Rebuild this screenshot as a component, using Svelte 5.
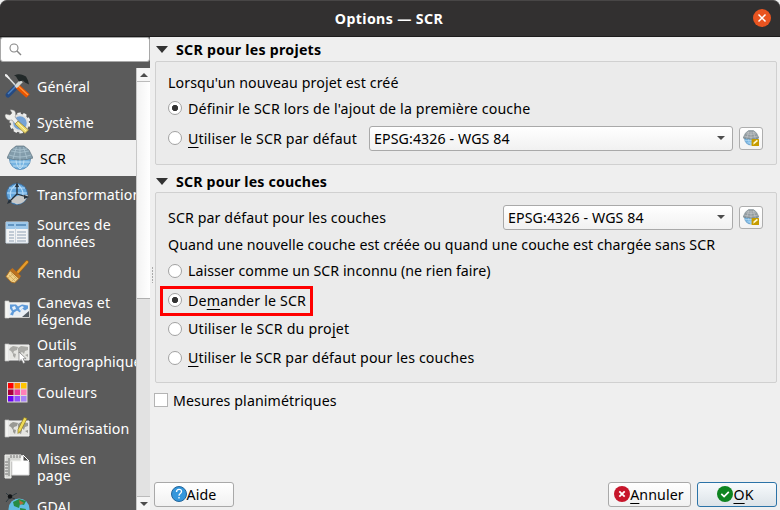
<script>
  const pages = [
    { icon: 'tools', lines: ['Général'] },
    { icon: 'system', lines: ['Système'] },
    { icon: 'crs', lines: ['SCR'], active: true },
    { icon: 'transform', lines: ['Transformations'] },
    { icon: 'table', lines: ['Sources de', 'données'] },
    { icon: 'brush', lines: ['Rendu'] },
    { icon: 'canvas', lines: ['Canevas et', 'légende'] },
    { icon: 'maptool', lines: ['Outils', 'cartographiques'] },
    { icon: 'colors', lines: ['Couleurs'] },
    { icon: 'digitize', lines: ['Numérisation'] },
    { icon: 'layout', lines: ['Mises en', 'page'] },
    { icon: 'gdal', lines: ['GDAL'] }
  ];
  const swatches = ['#f00', '#ff8c00', '#ffc400', '#a8003c', '#e8369a', '#ff80b8', '#6a00f4', '#8f4dff', '#a884f8'];
  const layerChoices = [
    { before: 'Laisser comme un SCR inconnu (ne rien faire)', key: '', after: '', tracking: 0.03 },
    { before: 'De', key: 'm', after: 'ander le SCR', tracking: 0.17, checked: true },
    { before: 'Utiliser le SCR du pro', key: 'j', after: 'et', tracking: 0.2 },
    { before: '', key: 'U', after: 'tiliser le SCR par défaut pour les couches', tracking: 0.12 }
  ];
</script>

{#snippet mapSheet(land)}
  <path d="M1 5h4v17H1z" fill="#f4f4f2" stroke="#bbb" stroke-width=".7" />
  <path d="M5 6h20v15H5z" fill="#e5e5e1" stroke="#f3f3f3" />
  <path d="M6 9l3-2 5 1-1 3-3 1-1 3-2-3-2-1zM9 14l3 1-1 4-2-2zM14 9l3-2 7 1v3l-3 1-1 3-2-2-3 2-1-3zM15 14l3 1-1 4-2-1zM21 16l3-1v3z" fill={land} />
{/snippet}

{#snippet globe(edit)}
  <svg viewBox="0 0 26 26" class="globe">
    <circle cx="13" cy="14" r="10.5" fill="#76b4e2" stroke="#4f86b3" stroke-width=".8" />
    <path d="M3 17h20M6 21h14M9 14c0 4 1 8 4 10M17 14c0 4-1 8-4 10M13 14v10" stroke="#cde7f8" fill="none" stroke-width=".8" />
    <path d="M9 1h8l5 4 4 8c-7 2.500-19 2.500-26 0l4-8z" fill={edit ? '#929b9f' : '#829cab'} stroke="#60747f" stroke-width=".7" />
    <path d="M4 6q9 3 18 0M2 10q11 4 22 0M9.500 2L6 14M13 2v13M16.500 2L20 14M6 4q7 2 14 0" stroke={edit ? '#d0d3d4' : '#acc4d0'} fill="none" stroke-width=".8" />
    {#if edit}
      <rect x="14" y="14.500" width="12" height="11.500" rx="1" fill="#c69c00" />
      <path d="M16.500 24l1-4 5-4 2 2-5 4z" fill="#fff8cf" />
    {/if}
  </svg>
{/snippet}

{#snippet radio(on)}
  <span class="radio" class:on></span>
{/snippet}

{#snippet icon(name)}
  {#if name === 'crs'}
    {@render globe(false)}
  {:else}
    <svg viewBox="0 0 26 26" class="icon">
      {#if name === 'tools'}
        <path d="M2 2l11 12" stroke="#d9dddd" stroke-width="1.600" />
        <path d="M1 1l2 .5 3 4-1 .5-4-3z" fill="#eee" />
        <path d="M12 14L4 22" stroke="#244a83" stroke-width="5" stroke-linecap="round" />
        <path d="M12 13L4 21" stroke="#4e82c0" stroke-width="1.400" />
        <path d="M13 13l11 10" stroke="#e95400" stroke-width="5" />
        <path d="M13 12l11 10" stroke="#ff963c" stroke-width="1.200" />
        <path d="M11.500 14l6-6" stroke="#d3d7d5" stroke-width="3.500" />
        <path d="M10 2.500c5-2.500 9-1 12 1l2 4 1 4-4-2-2-2-4 1-3-5z" fill="#222929" />
      {:else if name === 'system'}
        <circle cx="16" cy="14" r="8" fill="#75a3d6" stroke="#e1e1df" stroke-width="2.500" />
        <circle cx="16" cy="14" r="9.500" fill="none" stroke="#f1f1f0" stroke-width="2" stroke-dasharray="3.500 2.470" />
        <path d="M2 5l4 1 2-2-2-3c5-1 7 3 5 7l5 6-3 3-5-6c-4 1-7-1-7-5z" fill="#efefec" stroke="#777" stroke-width=".5" />
        <path d="M11 15l3-3 10.500 9-3.500 3.500z" fill="#eedc70" stroke="#8a7835" stroke-width=".7" />
        <path d="M14 14l8 8" stroke="#fff4aa" />
      {:else if name === 'transform'}
        <circle cx="13" cy="13" r="10.500" fill="#62a5dc" stroke="#3d6b98" />
        <path d="M3 12h20M5 7h16M5 18h16M13 3c-9 6-9 14 0 20M13 3c8 6 8 14 0 20" fill="none" stroke="#b6dcfa" stroke-width="1.100" />
        <path d="M6 21c2-5 9-8 18-7-2 6-6 9-10 9z" fill="#c7c8c7" />
        <path d="M13 13V3M13 13L5 21M13 13l10 3" stroke="#222d38" stroke-width="1.300" />
        <path d="M13 1l-2 5h4zM3 23l2-5 3 3zM25 16l-5-2v4z" fill="#26313b" />
      {:else if name === 'table'}
        <path d="M2 3h22v21H2z" fill="#f3f4f5" stroke="#d4e1ec" />
        <path d="M2 3h22v7H2z" fill="#9fc8ea" />
        <path d="M4 6h6M12 6h10" stroke="#4c83b5" stroke-width="1.500" />
        <path d="M5 13h5M13 13h9M5 16h5M13 16h9M5 19h5M13 19h9M5 22h5M13 22h9" stroke="#8fa1b5" />
        <path d="M11.500 9v15" stroke="#cbd5df" />
      {:else if name === 'brush'}
        <path d="M14 13l9-10" stroke="#9b6217" stroke-width="3.600" stroke-linecap="round" />
        <path d="M14 13l9-10" stroke="#e79d2d" stroke-width="2.300" stroke-linecap="round" />
        <path d="M8.500 9l8.500 8-2 3-10-8z" fill="#bd711f" />
        <path d="M6 11.500l9 8-4.500 4.500-3.500-1-5-5.500z" fill="#efcf87" stroke="#a66c22" />
        <path d="M5 16l6 6M7 14l6 6M9 15l-5 4M12 18l-4 4" stroke="#c49a4e" stroke-width=".6" />
      {:else if name === 'canvas'}
        <path d="M1 4h4v17H1z" fill="#f7f7f5" stroke="#c7c7c5" stroke-width=".7" />
        <path d="M4 6h21v14H4z" fill="#e9eef4" stroke="#f2f2ef" stroke-width="1.500" />
        <path d="M6 7.500h6l2 2 4-2 6 1v3l-3 2-3-2-2 4-3-2-3 2-1 3-3-1 2-3-2-3z" fill="#5f9bda" />
        <path d="M8 10l3-1 1 3-3 1zM15 11l3-2 2 1-4 4z" fill="#e8f0f8" />
        <path d="M18 20l7-6v6z" fill="#535b62" />
      {:else if name === 'maptool'}
        {@render mapSheet('#aaaaa6')}
        <path d="M15 13l0 9.500 2.300-2 2 4 1.800-1-2-3.800h3z" fill="#fff" stroke="#777" stroke-width=".7" />
      {:else if name === 'colors'}
        <path d="M3 3h20.500v20.500H3z" fill="#dfd9d6" />
        {#each swatches as fill, i}
          <rect x={4 + (i % 3) * 6.5} y={4 + Math.floor(i / 3) * 6.5} width="5.500" height="5.500" {fill} />
        {/each}
      {:else if name === 'digitize'}
        {@render mapSheet('#999994')}
        <path d="M20 2.500l3 1-6 12-3 3v-4z" fill="#f0db57" stroke="#8d7b23" stroke-width=".7" />
      {:else if name === 'layout'}
        <path d="M8 3h11l6 6v13H8z" fill="#fff" stroke="#ddd" />
        <path d="M19 2v6h6z" fill="#484848" stroke="#fff" />
        <path d="M1 2h16v6H7v17H1z" fill="#d6d7d4" stroke="#f5f5f2" />
        <path d="M7 2v3M10 2v3M13 2v3M16 2v3M1 9h3M1 12h3M1 15h3M1 18h3M1 21h3" stroke="#777" />
        <path d="M4 5h2v18H4z" fill="#a6a8a5" />
      {:else if name === 'gdal'}
        <circle cx="15" cy="16" r="10.500" fill="#63bde2" />
        <path d="M9 9l6-3 7 2-2 4-4-1-1 4-5-2zM16 15l6 1-2 5-3 4z" fill="#278c43" />
        <path d="M15 7l5 3-4 2z" fill="#b36b38" />
        <path d="M6 4L2 9M6 4l7-4M6 4l5 2M2 0l4 4" stroke="#303b40" />
        <circle cx="6" cy="3.500" r="2.200" fill="#101214" />
      {/if}
    </svg>
  {/if}
{/snippet}

<div class="window">
  <header class="titlebar">
    <span class="side"></span>
    <h1>Options — SCR</h1>
    <span class="side">
      <svg viewBox="0 0 18 18" class="close"><circle cx="9" cy="9" r="9" fill="#e95420" /><path d="M5.500 5.500l7 7m0-7l-7 7" stroke="#fff" stroke-width="1.500" /></svg>
    </span>
  </header>

  <div class="body">
    <aside>
      <div class="search">
        <svg viewBox="0 0 14 14"><circle cx="5" cy="5" r="4" fill="none" stroke="#858585" stroke-width="1.100" /><path d="M8 8l4 4" stroke="#858585" stroke-width="1.400" /></svg>
      </div>
      <div class="listing">
        <ul>
          {#each pages as page}
            <li class:active={page.active} class:double={page.lines.length > 1}>
              <span class="slot">{@render icon(page.icon)}</span>
              <span class="label">{#each page.lines as line}<span>{line}</span>{/each}</span>
            </li>
          {/each}
        </ul>
        <div class="scrollbar">
          <div class="step"><i class="tri up"></i></div>
          <div class="thumb"></div>
          <div class="track"></div>
          <div class="step last"><i class="tri"></i></div>
        </div>
      </div>
    </aside>

    <div class="splitter"></div>

    <main>
      <h2 class="first"><i class="tri big"></i><span class="h-projects">SCR pour les projets</span></h2>
      <section class="box projects">
        <div class="line caption"><span>Lorsqu'un nouveau projet est créé</span></div>
        <div class="line">{@render radio(true)}<span class="loose">Définir le SCR lors de l'ajout de la première couche</span></div>
        <div class="line controls">
          {@render radio(false)}<span class="loose"><u>U</u>tiliser le SCR par défaut</span>
          <div class="select wide"><span>EPSG:4326 - WGS 84</span><i class="tri"></i></div>
          <div class="pick">{@render globe(true)}</div>
        </div>
      </section>

      <h2 class="second"><i class="tri big"></i><span class="h-layers">SCR pour les couches</span></h2>
      <section class="box layers">
        <div class="line controls">
          <span>SCR par défaut pour les couches</span>
          <div class="select narrow"><span>EPSG:4326 - WGS 84</span><i class="tri"></i></div>
          <div class="pick">{@render globe(true)}</div>
        </div>
        <div class="line question"><span>Quand une nouvelle couche est créée ou quand une couche est chargée sans SCR</span></div>
        {#each layerChoices as choice}
          <div class="line choice" class:marked={choice.checked}>
            {@render radio(choice.checked)}<span style:letter-spacing="{choice.tracking}px">{choice.before}{#if choice.key}<u>{choice.key}</u>{/if}{choice.after}</span>
          </div>
        {/each}
      </section>

      <div class="check"><span class="tick"></span><span>Mesures planimétriques</span></div>

      <footer>
        <div class="btn help">
          <svg viewBox="0 0 16 16"><circle cx="8" cy="8" r="7.500" fill="#3497dc" stroke="#23659a" /><path d="M5.500 6c0-3.500 5-3.500 5-.5C10.500 7.500 8 7.500 8 9.700M8 11v1.600" fill="none" stroke="#fff" stroke-width="1.300" /></svg>
          <span>Aide</span>
        </div>
        <div class="btn cancel">
          <svg viewBox="0 0 16 16"><circle cx="8" cy="8" r="8" fill="#c7162b" /><path d="M5.300 5.300l5.400 5.400m0-5.400l-5.400 5.400" stroke="#fff" stroke-width="1.800" /></svg>
          <span><u>A</u>nnuler</span>
        </div>
        <div class="btn ok">
          <svg viewBox="0 0 16 16"><circle cx="8" cy="8" r="8" fill="#0e8420" /><path d="M4.300 7.800l2.800 2.700 4.700-4.700" fill="none" stroke="#fff" stroke-width="1.700" /></svg>
          <span><u>O</u>K</span>
        </div>
      </footer>
    </main>
  </div>
</div>

<style>
  :global(body) { margin: 0; background: #efefef; }
  .window {
    width: 780px; height: 510px; overflow: hidden; display: flex; flex-direction: column;
    background: #efefef; color: #000; letter-spacing: .1px;
    font: 14.2px/17px "Noto Sans", "Open Sans", sans-serif;
  }
  .window * { box-sizing: border-box; }
  span { white-space: nowrap; }
  u { text-decoration-thickness: 1px; text-underline-offset: 3px; text-decoration-skip-ink: none; }

  .titlebar {
    flex: none; height: 37px; display: flex; align-items: center; justify-content: space-between;
    background: #323030; color: #fff; border-radius: 7px 7px 0 0;
    border-top: 1px solid #484646; border-bottom: 1px solid #1d1c1c;
  }
  .titlebar h1 { margin: 0 2px 0 0; font-size: 14.2px; font-weight: 700; letter-spacing: .36px; }
  .side { width: 60px; display: flex; justify-content: flex-end; padding: 0 9px 1px 0; }
  .close { width: 18px; height: 18px; display: block; }

  .body { flex: 1; min-height: 0; display: flex; }
  aside { flex: none; width: 150px; display: flex; flex-direction: column; background: #5b5b5b; }
  .search {
    flex: none; height: 25px; padding: 5px 8px; background: #fff;
    border: 1px solid #a8a8a8; border-radius: 3px;
  }
  .search svg { width: 14px; height: 14px; display: block; }
  .listing { flex: 1; min-height: 0; display: flex; padding-top: 6px; }
  ul { flex: none; width: 136px; height: 442px; margin: 0; padding: 0; list-style: none; overflow: hidden; }
  li { height: 36px; display: flex; align-items: center; color: #fff; padding-left: 4px; }
  li.double { height: 42px; }
  li.active { background: #efefef; color: #000; padding-left: 7px; }
  .slot { flex: none; width: 33px; display: flex; }
  .slot :global(svg) { width: 26px; height: 26px; display: block; }
  .label { display: flex; flex-direction: column; padding-top: 1px; }
  .double .label { padding: 0 0 1px; }
  .double .slot { padding-bottom: 2px; }

  .scrollbar {
    flex: none; width: 14px; display: flex; flex-direction: column; background: #e2e2e2;
    border-left: 1px solid #c8c8c8;
  }
  .step { height: 14px; display: flex; align-items: center; justify-content: center; background: #f5f5f5; border-bottom: 1px solid #bbb; }
  .step.last { border: 0; border-top: 1px solid #bbb; }
  .thumb { height: 217px; background: linear-gradient(90deg, #f3f3f3, #fff); border-bottom: 1px solid #b0b0b0; }
  .track { flex: 1; }
  .tri { flex: none; display: block; width: 0; height: 0; border: solid transparent; border-width: 4px 4px 0; border-top-color: #4c4c4c; }
  .tri.up { transform: rotate(180deg); }
  .tri.big { border-width: 7px 6px 0; border-top-color: #333; }
  .splitter {
    flex: none; width: 4px; height: 16px; margin-top: 230px;
    background: radial-gradient(circle at 2.5px 1px, #aaa .7px, transparent 1px) 0 0 / 4px 3px;
  }

  main { flex: 1; min-width: 0; display: flex; flex-direction: column; padding: 0 3px 3px 0; }
  h2 { flex: none; margin: 0; display: flex; align-items: center; gap: 8px; padding: 0 0 0 2px; font-size: 14.2px; font-weight: 700; }
  h2.first { height: 24px; }
  h2.second { height: 22px; margin-top: 5px; }
  .h-projects { letter-spacing: .25px; }
  .h-layers { letter-spacing: .15px; }
  .box {
    flex: none; margin: 0 0 0 1px; width: 622px; padding: 0 13px 0 12px;
    background: #ebebeb; border: 1px solid #d0d0d0; border-radius: 2px;
  }
  .projects { height: 104px; padding-top: 7px; }
  .layers { height: 191px; padding-top: 9px; }
  .line { height: 26px; display: flex; align-items: center; }
  .line.controls { height: 30px; }
  .projects .controls { height: 34px; }
  .line .select { margin-left: auto; }
  .loose { letter-spacing: .15px; }
  .line.question { height: 25px; padding-bottom: 1px; letter-spacing: .055px; }
  .line.choice { width: 153px; height: 29px; margin-left: -8px; padding: 0 0 2px 8px; }
  .line.marked { border: 3px solid #f00; height: 30px; margin-bottom: -1px; padding-left: 5px; }

  .radio { flex: none; width: 14px; height: 14px; margin-right: 6px; border: 1px solid #a2a2a2; border-radius: 50%; background: #fff; }
  .radio.on { background: radial-gradient(circle, #333 2.8px, #fff 3.5px); }
  .select {
    flex: none; height: 25px; display: flex; align-items: center; justify-content: space-between;
    padding: 0 7px 0 4px; background: linear-gradient(#fff, #f1f1f1);
    border: 1px solid #a9a9a9; border-radius: 3px;
  }
  .wide { width: 364px; }
  .narrow { width: 230px; }
  .pick {
    flex: none; width: 24px; height: 23px; margin-left: 6px; display: flex; align-items: center; justify-content: center;
    background: linear-gradient(#fff, #f3f3f3); border: 1px solid #aeaeae; border-radius: 3px;
  }
  .pick :global(svg) { width: 16px; height: 16px; display: block; }

  .check { flex: none; height: 18px; margin-top: 8px; display: flex; align-items: center; gap: 5px; }
  .tick { width: 14px; height: 14px; background: #fff; border: 1px solid #b4b4b4; }

  footer { margin-top: auto; display: flex; gap: 6px; }
  .btn {
    height: 25px; display: flex; align-items: center; justify-content: center; padding-right: 1px;
    background: linear-gradient(#fff, #f1f1f1); border: 1px solid #a9a9a9; border-radius: 3px;
  }
  .btn svg { width: 16px; height: 16px; display: block; margin-bottom: 2px; }
  .help { width: 80px; margin-right: auto; }
  .cancel { width: 83px; }
  .ok { width: 80px; padding-right: 3px; border-color: #2b73a7; background: linear-gradient(#f7fafc, #dce3e8); }
</style>
